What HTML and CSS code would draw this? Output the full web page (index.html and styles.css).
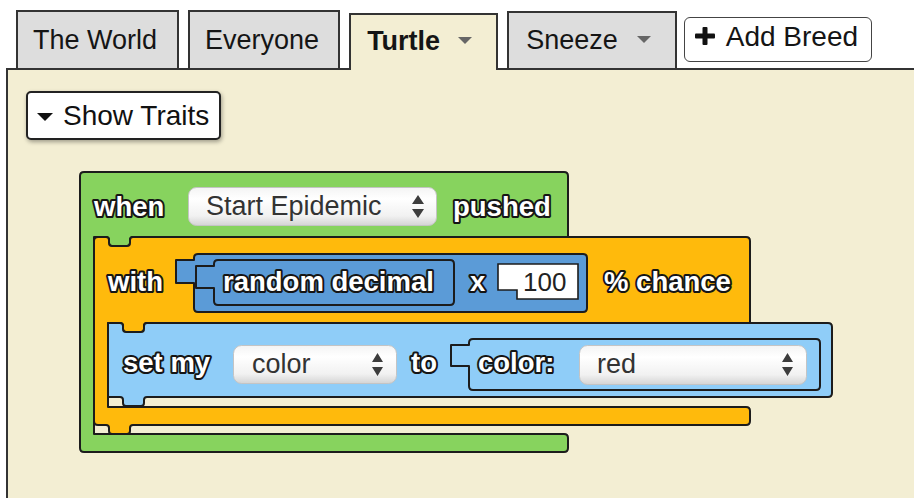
FILE: index.html
```html
<!DOCTYPE html>
<html>
<head>
<meta charset="utf-8">
<title>Breeds</title>
<link rel="stylesheet" href="styles.css">
</head>
<body>
<div class="app">
  <nav class="tabs">
    <div class="tab world">The World</div>
    <div class="tab">Everyone</div>
    <div class="tab active">Turtle<span class="caret"></span></div>
    <div class="tab sneeze">Sneeze<span class="caret"></span></div>
    <button class="add-breed"><svg class="plus" width="20" height="18" viewBox="0 0 20 18"><rect x="0" y="6.5" width="20" height="5" rx="1"/><rect x="7.5" y="0" width="5" height="18" rx="1"/></svg>Add Breed</button>
  </nav>
  <section class="panel">
    <button class="show-traits"><span class="tri"></span>Show Traits</button>
    <svg class="workspace" viewBox="70 160 780 300" width="780" height="300">
      <defs>
        <linearGradient id="dd" x1="0" y1="0" x2="0" y2="1">
          <stop offset="0" stop-color="#f4f4f4"/>
          <stop offset="0.3" stop-color="#ffffff"/>
          <stop offset="0.75" stop-color="#f1f1f1"/>
          <stop offset="1" stop-color="#d4d4d4"/>
        </linearGradient>
      </defs>
      <path class="blk green" d="M 80,176 Q 80,172 84,172 H 564 Q 568,172 568,176 V 237 H 133 Q 130,237 130,240 V 243 Q 130,246 127,246 H 112 Q 109,246 109,243 V 240 Q 109,237 106,237 H 94 V 434 H 564 Q 568,434 568,438 V 448 Q 568,452 564,452 H 84 Q 80,452 80,448 Z"/>
      <path class="blk orange" d="M 94,241 Q 94,237 98,237 H 106 Q 109,237 109,240 V 243 Q 109,246 112,246 H 127 Q 130,246 130,243 V 240 Q 130,237 133,237 H 746 Q 750,237 750,241 V 323 H 147 Q 144,323 144,326 V 329 Q 144,332 141,332 H 126 Q 123,332 123,329 V 326 Q 123,323 120,323 H 108 V 407 H 746 Q 750,407 750,411 V 421 Q 750,425 746,425 H 133 Q 130,425 130,428 V 431 Q 130,434 127,434 H 112 Q 109,434 109,431 V 428 Q 109,425 106,425 H 98 Q 94,425 94,421 Z"/>
      <path class="blk dark" d="M 194,258 Q 194,254 198,254 H 583 Q 587,254 587,258 V 308 Q 587,312 583,312 H 198 Q 194,312 194,308 V 283 H 176 V 260 H 194 Z"/>
      <path class="blk dark" d="M 214,264 Q 214,260 218,260 H 450 Q 454,260 454,264 V 301 Q 454,305 450,305 H 218 Q 214,305 214,301 V 288 H 196 V 266 H 214 Z"/>
      <path class="num" d="M 498,264 H 578 V 299 H 517 V 290 H 498 Z"/>
      <path class="blk light" d="M 108,323 H 120 Q 123,323 123,326 V 329 Q 123,332 126,332 H 141 Q 144,332 144,329 V 326 Q 144,323 147,323 H 828 Q 832,323 832,327 V 393 Q 832,397 828,397 H 147 Q 144,397 144,400 V 403 Q 144,406 141,406 H 126 Q 123,406 123,403 V 400 Q 123,397 120,397 H 108 Z"/>
      <path class="blk light" d="M 469,343 Q 469,339 473,339 H 816 Q 820,339 820,343 V 386 Q 820,390 816,390 H 473 Q 469,390 469,386 V 366 H 451 V 345 H 469 Z"/>

      <rect class="dd" x="188.5" y="187.5" width="248" height="38" rx="8"/>
      <rect class="dd" x="233.5" y="345.5" width="163" height="38" rx="8"/>
      <rect class="dd" x="579.5" y="345.5" width="227" height="39" rx="8"/>
      <path class="arr" d="M412 204 L418 195 L424 204 Z M412 209 L424 209 L418 218 Z"/>
      <path class="arr" d="M372 362 L377.5 353 L383 362 Z M372 367 L383 367 L377.5 376 Z"/>
      <path class="arr" d="M782 362 L787.5 353 L793 362 Z M782 367 L793 367 L787.5 376 Z"/>

      <text class="lbl" x="94" y="216">when</text>
      <text class="ddt" x="206" y="215">Start Epidemic</text>
      <text class="lbl" x="453" y="216">pushed</text>
      <text class="lbl" x="108" y="291">with</text>
      <text class="lbl" x="223" y="291">random decimal</text>
      <text class="lbl" x="470" y="291">x</text>
      <text class="numt" x="523" y="291">100</text>
      <text class="lbl" x="604" y="291">% chance</text>
      <text class="lbl" x="123" y="372">set my</text>
      <text class="ddt" x="252" y="373">color</text>
      <text class="lbl" x="411" y="372">to</text>
      <text class="lbl" x="478" y="372">color:</text>
      <text class="ddt" x="597" y="373">red</text>
    </svg>
  </section>
</div>
</body>
</html>
```

FILE: styles.css
```css
html, body {
  margin: 0;
  padding: 0;
  background: #ffffff;
  overflow: hidden;
}
body {
  width: 914px;
  height: 498px;
  font-family: "Liberation Sans", Arial, sans-serif;
  color: #151515;
}
.tabs {
  display: flex;
  align-items: flex-end;
  padding: 10px 0 0 16px;
  height: 58px;
}
.tab {
  height: 56px;
  line-height: 56px;
  border: 2px solid #333;
  border-bottom: none;
  background: #dddddd;
  padding: 0 19px 0 15px;
  font-size: 27px;
  margin-right: 9px;
  white-space: nowrap;
}
.tab.world {
  padding-right: 20px;
}
.tab.active {
  position: relative;
  z-index: 2;
  height: 55px;
  line-height: 53px;
  background: #f3eed3;
  font-weight: bold;
  padding: 0 24px 0 16px;
  margin-bottom: -2px;
}
.tab.sneeze {
  height: 55px;
  line-height: 55px;
  padding: 0 24px 0 17px;
  margin-right: 7px;
}
.caret {
  display: inline-block;
  width: 0;
  height: 0;
  border-left: 7px solid transparent;
  border-right: 7px solid transparent;
  border-top: 7px solid #666;
  margin-left: 18px;
  vertical-align: 6px;
}
.tab.sneeze .caret {
  margin-left: 19px;
}
.add-breed {
  align-self: center;
  box-sizing: border-box;
  height: 45px;
  display: flex;
  align-items: center;
  padding: 0 13px 4px 10px;
  border: 1.5px solid #444;
  border-radius: 6px;
  background: #ffffff;
  font-family: inherit;
  font-size: 28px;
  line-height: 38px;
  color: #151515;
}
.plus {
  fill: #111;
  margin-right: 11px;
  margin-bottom: 2px;
}
.panel {
  margin-left: 6px;
  width: 920px;
  height: 440px;
  border-top: 2px solid #333;
  border-left: 2px solid #333;
  background: #f3eed3;
  overflow: hidden;
}
.show-traits {
  box-sizing: border-box;
  height: 49px;
  margin: 21px 0 0 18px;
  display: flex;
  align-items: center;
  padding: 0 10px 0 9px;
  border: 2px solid #222;
  border-radius: 5px;
  background: #ffffff;
  box-shadow: 1px 2px 4px rgba(0, 0, 0, 0.35);
  font-family: inherit;
  font-size: 28px;
  line-height: 45px;
  color: #111;
}
.tri {
  width: 0;
  height: 0;
  border-left: 8px solid transparent;
  border-right: 8px solid transparent;
  border-top: 8px solid #111;
  margin-right: 10px;
  margin-top: 2px;
}
.workspace {
  display: block;
  margin: 20px 0 0 62px;
  overflow: visible;
}
.blk {
  stroke: #1c1c1c;
  stroke-width: 2px;
  stroke-linejoin: round;
}
.green { fill: #87d35e; }
.orange { fill: #ffba0c; }
.dark { fill: #5b9bd7; }
.light { fill: #8fcdf8; }
.num {
  fill: #ffffff;
  stroke: #1c1c1c;
  stroke-width: 1.6px;
}
.dd {
  fill: url(#dd);
  stroke: #c4c4c4;
  stroke-width: 1px;
}
.arr { fill: #3d3d3d; }
.lbl {
  font-family: "Liberation Sans", Arial, sans-serif;
  font-weight: 700;
  font-size: 27.5px;
  fill: #ffffff;
  stroke: #151515;
  stroke-width: 4px;
  stroke-linejoin: round;
  paint-order: stroke fill;
}
.ddt {
  font-family: "Liberation Sans", Arial, sans-serif;
  font-size: 27px;
  fill: #333333;
}
.numt {
  font-family: "Liberation Sans", Arial, sans-serif;
  font-size: 26px;
  fill: #222222;
}
```
